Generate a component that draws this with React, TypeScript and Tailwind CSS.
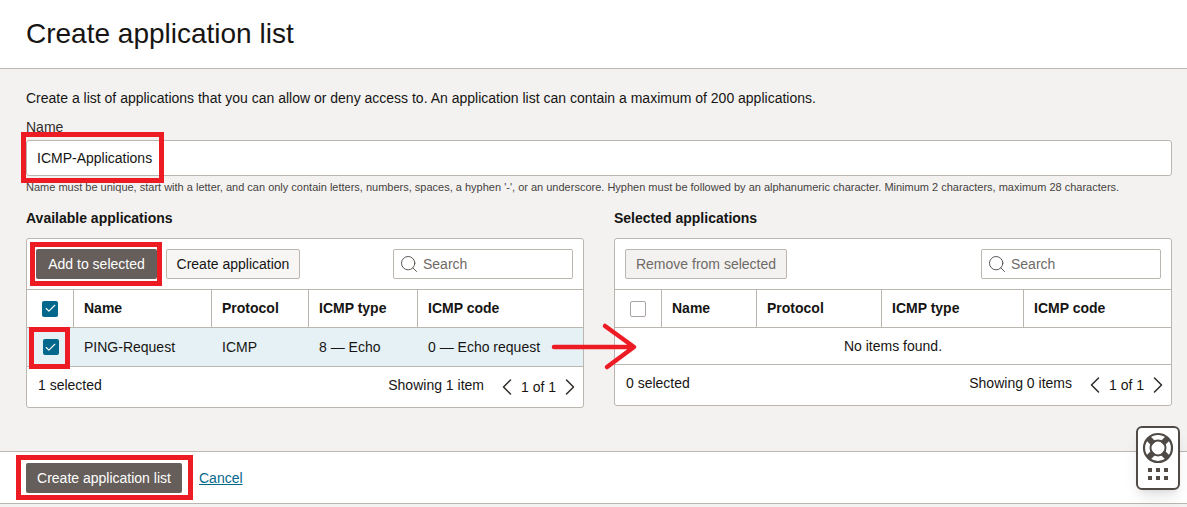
import React from 'react';
import { Check, ChevronLeft, ChevronRight, Search } from 'lucide-react';

const ink = 'text-[#161513]';

const Checkbox = ({ checked = false }: { checked?: boolean }) =>
  checked ? (
    <span className="flex h-4 w-4 items-center justify-center rounded-[2px] bg-[#04678c] text-white">
      <Check size={13} strokeWidth={2} />
    </span>
  ) : (
    <span className="h-4 w-4 rounded-[2px] border border-[#a9a4a0] bg-white" />
  );

const SearchBox = () => (
  <div className="flex h-[30px] w-[180px] items-center gap-[4px] rounded-[2px] border border-[#bcb6b1] bg-white pl-[5px]">
    <Search size={20} strokeWidth={1.2} className="text-[#5c5753]" />
    <span className="text-[14px] text-[#6f6a66]">Search</span>
  </div>
);

const HeaderCell = ({ label, last = false }: { label: string; last?: boolean }) => (
  <div className={`flex items-center border-[#bcb6b1] pl-[10px] text-[14px] font-bold ${ink} ${last ? '' : 'border-r'}`}>
    {label}
  </div>
);

const Pager = ({ showing }: { showing: string }) => (
  <div className="-mr-[1px] flex items-center">
    <span className={`-mt-[3px] text-[14px] ${ink}`}>{showing}</span>
    <ChevronLeft size={28} strokeWidth={1.3} className="ml-[9px] text-[#312d2a]" />
    <span className={`text-[14px] ${ink}`}>1 of 1</span>
    <ChevronRight size={28} strokeWidth={1.3} className="text-[#312d2a]" />
  </div>
);

const Panel = ({
  title,
  toolbar,
  cols,
  allChecked,
  body,
  selected,
  showing,
}: {
  title: string;
  toolbar: React.ReactNode;
  cols: string;
  allChecked: boolean;
  body: React.ReactNode;
  selected: string;
  showing: string;
}) => (
  <section>
    <h2 className={`mb-[11px] h-[17px] text-[14px] leading-[17px] font-bold ${ink}`}>{title}</h2>
    <div className="rounded-[3px] border border-[#bcb6b1] bg-white">
      <div className="flex h-[50px] items-center justify-between pr-[10px] pl-[10px]">
        <div className="flex items-center gap-[9px]">{toolbar}</div>
        <SearchBox />
      </div>
      <div className={`grid h-[39px] border-y border-[#bcb6b1] ${cols}`}>
        <div className="flex items-center justify-center border-r border-[#bcb6b1]">
          <Checkbox checked={allChecked} />
        </div>
        <HeaderCell label="Name" />
        <HeaderCell label="Protocol" />
        <HeaderCell label="ICMP type" />
        <HeaderCell label="ICMP code" last />
      </div>
      {body}
      <div className={`flex h-[40px] items-center justify-between pr-0 pl-[11px] text-[14px] ${ink}`}>
        <span className="-mt-[4px]">{selected}</span>
        <Pager showing={showing} />
      </div>
    </div>
  </section>
);

const LifeBuoy = () => (
  <svg width="32" height="32" viewBox="0 0 32 32" fill="none">
    <circle cx="16" cy="16" r="14" stroke="#4f4a46" strokeWidth="2.2" />
    <circle cx="16" cy="16" r="7.5" stroke="#4f4a46" strokeWidth="2" />
    <path d="M6.5 6.5l5 5M25.5 6.5l-5 5M6.5 25.5l5-5M25.5 25.5l-5-5" stroke="#4f4a46" strokeWidth="6" />
  </svg>
);

// red marks drawn on top of the screenshot
const Mark = ({ className }: { className: string }) => (
  <div className={`absolute border-[5px] border-[#ed1c24] ${className}`} />
);

export default function App() {
  return (
    <div className="relative flex h-[507px] w-[1187px] flex-col overflow-hidden bg-[#f3f2f1] font-['Liberation_Sans',Arial,sans-serif]">
      <header className="flex h-[69px] items-center border-b border-[#bcb6b1] bg-white pl-[26px]">
        <h1 className={`-mt-[1px] text-[28px] ${ink}`}>Create application list</h1>
      </header>

      <main className="h-[382px] pr-[15px] pl-[26px]">
        <p className={`mt-[21px] h-[16px] text-[14px] leading-[16px] ${ink}`}>
          Create a list of applications that you can allow or deny access to. An application list can contain a maximum
          of 200 applications.
        </p>
        <label className="mt-[13px] block h-[16px] text-[14px] leading-[16px] text-[#312d2a]">Name</label>
        <div className="mt-[5px] flex h-[36px] items-center rounded-[3px] border border-[#bcb6b1] bg-white pl-[10px]">
          <span className={`text-[14px] ${ink}`}>ICMP-Applications</span>
        </div>
        <p className="mt-[5px] mb-[16px] h-[13px] text-[11px] leading-[13px] text-[#46423e]">
          Name must be unique, start with a letter, and can only contain letters, numbers, spaces, a hyphen '-', or an
          underscore. Hyphen must be followed by an alphanumeric character. Minimum 2 characters, maximum 28 characters.
        </p>

        <div className="grid grid-cols-2 items-start gap-[30px]">
          <Panel
            title="Available applications"
            cols="grid-cols-[47px_138px_97px_109px_1fr]"
            allChecked
            selected="1 selected"
            showing="Showing 1 item"
            toolbar={
              <>
                <button className="-ml-[1px] h-[30px] w-[121px] rounded-[2px] bg-[#665e5a] text-[14px] text-white">
                  Add to selected
                </button>
                <button className={`h-[30px] w-[134px] rounded-[2px] border border-[#bcb6b1] bg-[#f7f6f5] text-[14px] ${ink}`}>
                  Create application
                </button>
              </>
            }
            body={
              <div className={`grid h-[39px] grid-cols-[47px_138px_97px_109px_1fr] border-b border-[#bcb6b1] bg-[#e6f1f5] text-[14px] ${ink}`}>
                <div className="flex items-center justify-center">
                  <Checkbox checked />
                </div>
                <div className="flex items-center pl-[10px]">PING-Request</div>
                <div className="flex items-center pl-[10px]">ICMP</div>
                <div className="flex items-center pl-[10px]">8 — Echo</div>
                <div className="flex items-center pl-[10px]">0 — Echo request</div>
              </div>
            }
          />
          <Panel
            title="Selected applications"
            cols="grid-cols-[47px_95px_125px_142px_1fr]"
            allChecked={false}
            selected="0 selected"
            showing="Showing 0 items"
            toolbar={
              <button className="h-[30px] w-[162px] rounded-[2px] border border-[#bcb6b1] bg-[#f3f2f1] text-[14px] text-[#6f6a66]">
                Remove from selected
              </button>
            }
            body={
              <div className={`flex h-[37px] items-center justify-center border-b border-[#bcb6b1] text-[14px] ${ink}`}>
                No items found.
              </div>
            }
          />
        </div>
      </main>

      <footer className="flex h-[53px] items-center gap-[17px] border-y border-[#bcb6b1] bg-white pt-[1px] pl-[26px]">
        <button className="h-[30px] w-[156px] rounded-[2px] bg-[#665e5a] text-[14px] text-white">
          Create application list
        </button>
        <a className="text-[14px] text-[#04678c] underline">Cancel</a>
      </footer>

      <Mark className="top-[132px] left-[21px] h-[51px] w-[143px]" />
      <Mark className="top-[242px] left-[30px] h-[44px] w-[132px]" />
      <Mark className="top-[327px] left-[29px] h-[42px] w-[41px]" />
      <Mark className="top-[455px] left-[16px] h-[45px] w-[177px]" />

      <svg className="absolute top-[320px] left-[548px]" width="95" height="54" viewBox="0 0 95 54" fill="none">
        <path
          d="M6 27H85M57 6l29 21-27 20"
          stroke="#ed1c24"
          strokeWidth="4.5"
          strokeLinecap="round"
          strokeLinejoin="round"
        />
      </svg>

      <div className="absolute top-[426px] left-[1136px] flex h-[64px] w-[44px] flex-col items-center rounded-[6px] border-2 border-[#4f4a46] bg-white pt-[4px] shadow-lg">
        <LifeBuoy />
        <div className="mt-[4px] grid grid-cols-3 gap-x-[4px] gap-y-[4px]">
          {[0, 1, 2, 3, 4, 5].map((i) => (
            <span key={i} className="h-[4px] w-[4px] bg-[#4f4a46]" />
          ))}
        </div>
      </div>
    </div>
  );
}
